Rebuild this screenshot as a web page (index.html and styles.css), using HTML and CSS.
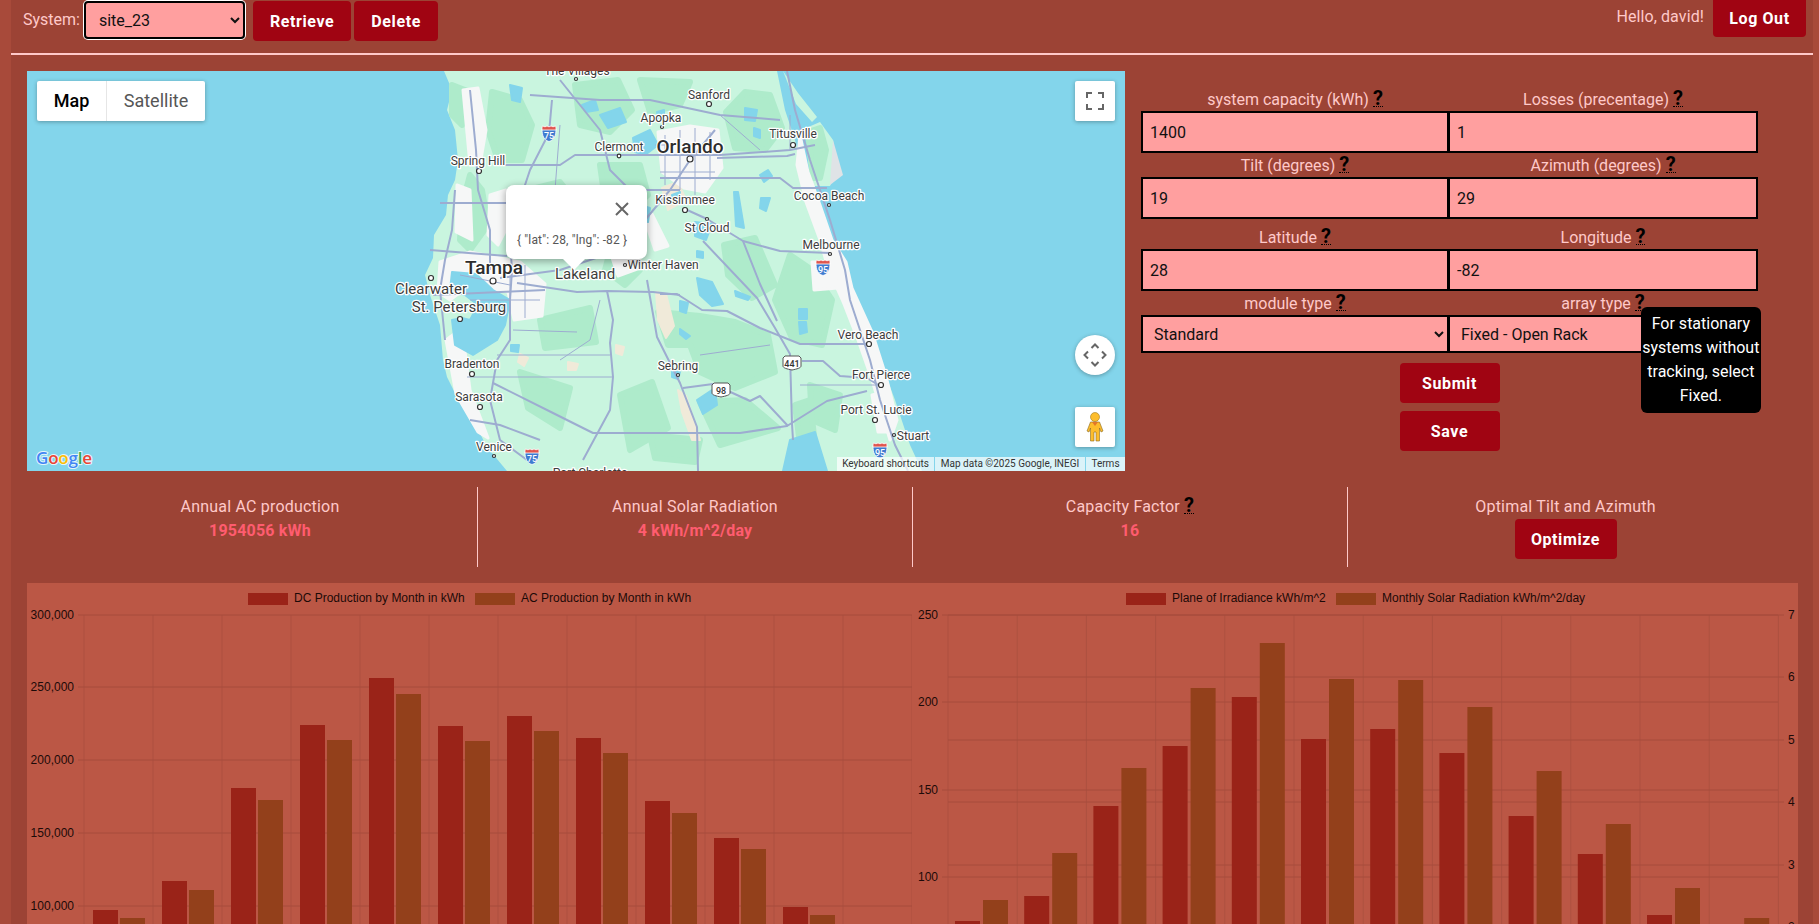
FILE: index.html
```html
<!DOCTYPE html>
<html lang="en">
<head>
    <meta charset="UTF-8">
    <title>Solar Dashboard</title>
    <link rel="stylesheet" href="styles.css">
</head>
<body>
    <div class="container">
        <div class="header">
            <div class="system-bar">
                <label class="system-label" for="systemSelect">System:</label>
                <select class="system-select" id="systemSelect">
                    <option>site_23</option>
                </select>
                <button class="button">Retrieve</button>
                <button class="button">Delete</button>
            </div>
            <div class="user-bar">
                <span class="greeting">Hello, david!</span>
                <button class="button logout">Log Out</button>
            </div>
        </div>
        <hr class="divider">

        <div class="top-row">
            <div class="map">
                <svg class="map-canvas" viewBox="27 71 1098 400" width="1098" height="400">
                    <defs>
                        <symbol id="interstate" viewBox="0 0 16 17">
                            <path d="M1 4C1 11 3 15 8 16.5 13 15 15 11 15 4Z" fill="#3f7bd0" stroke="#fff" stroke-width=".8"/>
                            <path d="M1 5C1 3 1 2 1.500 1L4 1.800 6 1 8 1.800 10 1 12 1.800 14.500 1C15 2 15 3 15 5Z" fill="#e0564f" stroke="#fff" stroke-width=".8"/>
                        </symbol>
                        <symbol id="ushield" viewBox="0 0 20 16">
                            <path d="M3 1H17L19 3V11C19 13 15 14 10 15 5 14 1 13 1 11V3Z" fill="#fff" stroke="#555" stroke-width="1"/>
                        </symbol>
                    </defs>
                    <rect class="water-bg" x="27" y="71" width="1098" height="400"/>

                    <g class="map-base">
                        <!-- land -->
                        <path class="land" d="M444 71 452 90 447 110 455 130 458 160 455 180 448 195 446 215 434 235 433 258 425 275 430 295 440 325 443 360 447 377 460 403 473 420 487 447 507 471H922L910 445 895 400 880 360 870 330 850 285 835 255 825 230 810 190 802 165 795 140 785 110 777 71Z"/>
                        <path class="land" d="M806 128 820 122 833 140 837 170 830 186 812 186 808 160Z"/>
                        <path class="land" d="M783 71 798 93 817 117 812 122 796 104Z"/>
                        <path class="cape" d="M833 140 843 175 830 185Z"/>

                        <!-- woods -->
                        <path class="woods" d="M452 85 470 92 462 125 452 115Z"/>
                        <path class="woods" d="M492 92 520 100 532 125 522 160 498 160 488 130Z"/>
                        <path class="woods" d="M470 175 482 190 488 225 470 250 460 240 462 205Z"/>
                        <path class="woods" d="M528 190 560 182 578 205 570 240 545 252 526 235Z"/>
                        <path class="woods" d="M575 85 618 80 632 110 610 132 580 125Z"/>
                        <path class="woods" d="M640 80 690 82 680 105 650 112Z"/>
                        <path class="woods" d="M726 112 745 92 770 95 782 128 765 150 735 148Z"/>
                        <path class="woods" d="M600 165 640 165 648 195 625 215 605 200Z"/>
                        <path class="woods" d="M724 245 755 238 775 285 752 298 728 275Z"/>
                        <path class="woods" d="M658 312 700 316 735 322 768 335 775 372 735 388 700 372 690 345 668 345Z"/>
                        <path class="woods" d="M790 255 812 270 832 300 822 345 792 338 775 300Z"/>
                        <path class="woods" d="M700 402 745 400 778 428 720 445Z"/>
                        <path class="woods" d="M540 320 590 308 596 342 545 348Z"/>
                        <path class="woods" d="M520 372 570 388 560 428 528 408Z"/>
                        <path class="woods" d="M620 395 652 382 668 428 630 450Z"/>
                        <path class="woods" d="M810 385 840 395 835 430 812 420Z"/>
                        <path class="woods" d="M650 435 700 440 695 462 655 458Z"/>
                        <path class="woods" d="M808 132 820 128 826 150 820 178 813 178Z"/>
                        <path class="woods" d="M795 405 810 400 815 445 800 445Z"/>
                        <path class="woods" d="M615 232 640 270 625 285 605 270Z"/>

                        <!-- sandy patches -->
                        <path class="sand" d="M662 188 678 182 686 200 668 210Z"/>
                        <path class="sand" d="M656 292 666 294 674 326 666 338 658 320Z"/>
                        <path class="sand" d="M568 362 578 364 576 370 568 370Z"/>
                        <path class="sand" d="M520 354 528 358 524 366 518 362Z"/>
                        <path class="sand" d="M616 345 624 347 622 355 616 353Z"/>
                        <path class="sand" d="M678 390 686 396 700 440 692 440 682 412Z"/>

                        <!-- towns -->
                        <path class="urban" d="M463 90 478 88 486 130 480 165 470 165Z"/>
                        <path class="urban" d="M457 185 470 190 472 240 456 232Z"/>
                        <path class="urban" d="M490 195 506 190 510 222 498 245 488 235Z"/>
                        <path class="urban" d="M440 262 470 252 520 262 545 284 542 316 514 320 508 292 470 285 450 300 438 292Z"/>
                        <path class="urban" d="M658 132 690 126 718 130 722 168 705 192 684 188 662 172Z"/>
                        <path class="urban" d="M446 340 462 328 470 390 488 438 478 432 456 394Z"/>
                        <path class="urban" d="M800 135 808 172 820 205 832 240 846 262 852 288 872 332 886 376 897 420 890 440 884 420 872 380 858 340 844 304 828 268 820 240 806 202 797 165Z"/>
                        <path class="urban" d="M812 262 832 262 838 288 814 290Z"/>
                        <path class="urban" d="M605 236 625 240 640 268 618 276Z"/>
                        <path class="urban" d="M640 206 652 214 668 246 655 250Z"/>
                        <path class="urban" d="M872 395 884 392 890 432 878 432Z"/>

                        <!-- lakes -->
                        <path class="lake" d="M452 272 476 274 493 290 510 300 505 325 497 340 473 355 455 345 452 320 462 318 470 320 478 305 465 295 450 290Z"/>
                        <path class="lake" d="M633 138 650 130 658 145 645 155 635 152Z"/>
                        <path class="lake" d="M697 278 712 282 723 304 712 306 700 295Z"/>
                        <path class="lake" d="M697 400 715 388 717 405 703 414Z"/>
                        <path class="lake" d="M783 471 790 440 815 432 827 471Z"/>
                        <path class="lake" d="M695 222 712 224 706 240 695 236Z"/>
                        <path class="lake" d="M745 108 757 110 755 121 745 120Z"/>
                        <path class="lake" d="M754 128 760 130 760 138 754 136Z"/>
                        <path class="lake" d="M761 198 770 198 766 211 760 208Z"/>
                        <path class="lake" d="M734 192 738 192 744 228 736 226Z"/>
                        <path class="lake" d="M680 301 688 303 686 313 680 311Z"/>
                        <path class="lake" d="M697 251 703 252 703 258 697 257Z"/>
                        <path class="lake" d="M680 329 690 336 686 339 680 334Z"/>
                        <path class="lake" d="M735 291 750 297 748 300 736 296Z"/>
                        <path class="lake" d="M799 309 807 309 807 319 799 319Z"/>
                        <path class="lake" d="M799 322 806 322 807 332 800 334Z"/>
                        <path class="lake" d="M672 371 680 372 678 379 672 377Z"/>
                        <path class="lake" d="M640 205 650 208 648 222 638 218Z"/>
                        <path class="lake" d="M510 85 522 88 520 102 512 100Z"/>
                        <path class="lake" d="M582 105 595 100 598 110 586 112Z"/>
                        <path class="lake" d="M600 115 620 108 626 122 608 128Z"/>
                        <path class="lake" d="M657 112 664 110 664 118 658 118Z"/>
                        <path class="lake" d="M511 345 519 345 518 352 511 351Z"/>
                        <path class="lake" d="M672 195 680 192 678 200 672 200Z"/>
                        <path class="lake" d="M760 175 768 170 772 176 764 182Z"/>
                    </g>

                    <!-- roads -->
                    <g class="roads">
                        <path d="M552 100 549 133 530 170 520 200 510 240 512 270 510 300 510 340 497 360 490 400 500 440 527 460"/>
                        <path d="M470 90 476 150 478 190 490 230 490 270"/>
                        <path d="M455 190 452 230 445 260 440 290 445 340"/>
                        <path d="M500 278 560 270 620 250 670 190 690 160 715 130"/>
                        <path d="M560 80 600 130 610 170 630 190 680 190"/>
                        <path d="M500 165 560 165 575 155 650 155 720 155 790 150 815 145"/>
                        <path d="M530 95 600 100 650 100 720 115 780 120"/>
                        <path d="M787 71 795 110 810 160 830 220 845 270 850 300 870 360 880 400 895 445 908 471"/>
                        <path d="M517 283 577 292 607 291 653 292 680 295"/>
                        <path d="M607 291 613 320 610 343 613 377 610 410 583 460"/>
                        <path d="M647 280 657 337 680 383 697 427 698 471"/>
                        <path d="M493 383 553 413 593 433 740 433 787 426 827 401 867 391"/>
                        <path d="M660 294 677 294 702 310 727 311 760 328 800 344 868 344"/>
                        <path d="M703 241 757 298 775 328 790 354 792 424 793 440"/>
                        <path d="M685 209 707 219 743 241 780 251 830 253"/>
                        <path d="M743 241 760 284 777 321"/>
                        <path d="M660 178 780 178 793 188 827 188"/>
                        <path d="M717 158 787 156 795 154"/>
                        <path d="M802 361 823 361 840 376 867 378 880 386"/>
                        <path d="M683 388 713 384 750 401 760 396 788 426"/>
                        <path d="M440 203 507 203"/>
                        <path d="M433 295 545 290"/>
                        <path d="M470 420 500 425 540 440"/>
                        <path d="M430 250 507 256"/>
                    </g>
                    <g class="roads thin">
                        <path d="M665 135V185M680 130V190M695 128V195M710 132V180"/>
                        <path d="M655 145H720M660 172H715"/>
                        <path d="M510 270V320M525 265V318M460 275 510 285M470 300H540"/>
                        <path d="M560 125 555 190M600 300 590 340 560 360"/>
                        <path d="M467 377 613 377M497 355 610 355M513 330 577 332"/>
                        <path d="M720 115 760 150M790 115 790 150M700 355 770 345M800 385H880"/>
                    </g>

                    <!-- shields -->
                    <use href="#interstate" x="541" y="125" width="16" height="17"/>
                    <text class="shield-text" x="549" y="139">75</text>
                    <use href="#interstate" x="524" y="448" width="16" height="17"/>
                    <text class="shield-text" x="532" y="462">75</text>
                    <use href="#interstate" x="815" y="259" width="16" height="17"/>
                    <text class="shield-text" x="823" y="273">95</text>
                    <use href="#interstate" x="872" y="442" width="16" height="17"/>
                    <text class="shield-text" x="880" y="456">95</text>
                    <use href="#ushield" x="782" y="355" width="20" height="16"/>
                    <text class="shield-text dark" x="792" y="367">441</text>
                    <use href="#ushield" x="711" y="382" width="20" height="16"/>
                    <text class="shield-text dark" x="721" y="394">98</text>

                    <!-- city dots -->
                    <g class="dots">
                        <circle cx="479" cy="171" r="2.500"/><circle cx="619" cy="156" r="1.800"/>
                        <circle cx="662" cy="127" r="1.500"/><circle cx="709" cy="104" r="2.500"/>
                        <circle cx="690" cy="159" r="3"/><circle cx="493" cy="281" r="3"/>
                        <circle cx="431" cy="278" r="2.500"/><circle cx="460" cy="319" r="2.500"/>
                        <circle cx="685" cy="210" r="2.500"/><circle cx="707" cy="219" r="1.500"/>
                        <circle cx="625" cy="265" r="1.500"/><circle cx="793" cy="145" r="2.500"/>
                        <circle cx="829" cy="205" r="1.500"/><circle cx="830" cy="254" r="1.500"/>
                        <circle cx="869" cy="344" r="2.500"/><circle cx="881" cy="385" r="2.500"/>
                        <circle cx="875" cy="420" r="2.500"/><circle cx="894" cy="435" r="1.500"/>
                        <circle cx="678" cy="375" r="1.500"/><circle cx="472" cy="374" r="2.500"/>
                        <circle cx="480" cy="407" r="2.500"/><circle cx="494" cy="456" r="1.500"/>
                        <circle cx="576" cy="79" r="1.500"/>
                    </g>

                    <!-- city labels -->
                    <g class="places">
                        <text x="577" y="75">The Villages</text>
                        <text x="709" y="99">Sanford</text>
                        <text x="661" y="122">Apopka</text>
                        <text x="619" y="151">Clermont</text>
                        <text x="478" y="165">Spring Hill</text>
                        <text x="793" y="138">Titusville</text>
                        <text x="685" y="204">Kissimmee</text>
                        <text x="707" y="232">St Cloud</text>
                        <text x="829" y="200">Cocoa Beach</text>
                        <text x="663" y="269">Winter Haven</text>
                        <text x="831" y="249">Melbourne</text>
                        <text x="868" y="339">Vero Beach</text>
                        <text x="678" y="370">Sebring</text>
                        <text x="472" y="368">Bradenton</text>
                        <text x="881" y="379">Fort Pierce</text>
                        <text x="479" y="401">Sarasota</text>
                        <text x="876" y="414">Port St. Lucie</text>
                        <text x="913" y="440">Stuart</text>
                        <text x="494" y="451">Venice</text>
                        <text x="590" y="477">Port Charlotte</text>
                        <text class="medium" x="431" y="294">Clearwater</text>
                        <text class="medium" x="459" y="312">St. Petersburg</text>
                        <text class="medium" x="585" y="279">Lakeland</text>
                        <text class="large" x="494" y="274">Tampa</text>
                        <text class="large" x="690" y="153">Orlando</text>
                    </g>
                </svg>

                <div class="map-type">
                    <div class="map-type-item active">Map</div>
                    <div class="map-type-item">Satellite</div>
                </div>

                <div class="map-popup">
                    <svg class="popup-close" viewBox="0 0 14 14" width="14" height="14">
                        <path d="M1 1 13 13M13 1 1 13"/>
                    </svg>
                    <div class="popup-text">{ "lat": 28, "lng": -82 }</div>
                </div>

                <button class="map-control fullscreen">
                    <svg viewBox="0 0 18 18" width="18" height="18">
                        <path d="M1 6V1H6M12 1H17V6M17 12V17H12M6 17H1V12"/>
                    </svg>
                </button>
                <button class="map-control pan">
                    <svg viewBox="0 0 24 24" width="24" height="24">
                        <path d="M8.500 5 12 1.500 15.500 5M5 8.500 1.500 12 5 15.500M19 8.500 22.500 12 19 15.500M8.500 19 12 22.500 15.500 19"/>
                    </svg>
                </button>
                <button class="map-control pegman">
                    <svg viewBox="0 0 18 30" width="18" height="30">
                        <circle cx="9" cy="5" r="4.500" fill="#fdbd2c" stroke="#a07a22" stroke-width=".6"/>
                        <path d="M4.500 10H13.500L17 19 15 20 13.500 16V29H10V20H8V29H4.500V16L3 20 1 19Z" fill="#fdbd2c" stroke="#8a6a20" stroke-width=".6"/>
                        <path d="M6 10H12L9 14Z" fill="#e2762a"/>
                    </svg>
                </button>

                <div class="google-logo"><span class="g-blue">G</span><span class="g-red">o</span><span class="g-yellow">o</span><span class="g-blue">g</span><span class="g-green">l</span><span class="g-red">e</span></div>
                <div class="attribution">
                    <span class="attribution-item shortcuts">Keyboard shortcuts</span>
                    <span class="attribution-item data">Map data ©2025 Google, INEGI</span>
                    <span class="attribution-item terms">Terms</span>
                </div>
            </div>

            <div class="system-form">
                <div class="form-row">
                    <div class="form-cell">
                        <div class="field-label">system capacity (kWh) <span class="help">?</span></div>
                        <input class="field" type="text" value="1400">
                    </div>
                    <div class="form-cell">
                        <div class="field-label">Losses (precentage) <span class="help">?</span></div>
                        <input class="field" type="text" value="1">
                    </div>
                </div>
                <div class="form-row">
                    <div class="form-cell">
                        <div class="field-label">Tilt (degrees) <span class="help">?</span></div>
                        <input class="field" type="text" value="19">
                    </div>
                    <div class="form-cell">
                        <div class="field-label">Azimuth (degrees) <span class="help">?</span></div>
                        <input class="field" type="text" value="29">
                    </div>
                </div>
                <div class="form-row spaced">
                    <div class="form-cell">
                        <div class="field-label">Latitude <span class="help">?</span></div>
                        <input class="field" type="text" value="28">
                    </div>
                    <div class="form-cell">
                        <div class="field-label">Longitude <span class="help">?</span></div>
                        <input class="field" type="text" value="-82">
                    </div>
                </div>
                <div class="form-row">
                    <div class="form-cell">
                        <div class="field-label">module type <span class="help">?</span></div>
                        <select class="field field-select"><option>Standard</option></select>
                    </div>
                    <div class="form-cell">
                        <div class="field-label">array type <span class="help">?<span class="tooltip">For stationary systems without tracking, select Fixed.</span></span></div>
                        <select class="field field-select"><option>Fixed - Open Rack</option></select>
                    </div>
                </div>
                <div class="form-actions">
                    <button class="button wide">Submit</button>
                    <button class="button wide">Save</button>
                </div>
            </div>
        </div>

        <div class="stats">
            <div class="stat">
                <div class="stat-title">Annual AC production</div>
                <div class="stat-value">1954056 kWh</div>
            </div>
            <div class="stat">
                <div class="stat-title">Annual Solar Radiation</div>
                <div class="stat-value">4 kWh/m^2/day</div>
            </div>
            <div class="stat">
                <div class="stat-title">Capacity Factor <span class="help">?</span></div>
                <div class="stat-value">16</div>
            </div>
            <div class="stat">
                <div class="stat-title">Optimal Tilt and Azimuth</div>
                <button class="button optimize">Optimize</button>
            </div>
        </div>

        <div class="charts">
            <svg class="chart" id="productionChart" width="885" height="341"></svg>
            <svg class="chart" id="radiationChart" width="886" height="341"></svg>
        </div>
    </div>

    <script src="charts.js"></script>
</body>
</html>
```
FILE: styles.css
```css
/* base */
body {
    font-family: 'Roboto', 'Liberation Sans', sans-serif;
    margin: 0;
    height: 924px;
    overflow: hidden;
    background-color: #a84a3a;
    color: #ffc9c9;
    font-size: 16px;
}
.container {
    margin: 0 6px 0 11px;
    height: 924px;
    background-color: #9c4335;
}
.button {
    font-family: inherit;
    font-size: 16px;
    font-weight: bold;
    letter-spacing: 0.6px;
    color: #fff;
    background: #a00412;
    border: none;
    border-radius: 4px;
    height: 40px;
    padding: 0 17px;
}

/* header */
.header {
    display: flex;
    justify-content: space-between;
    height: 53px;
}
.system-bar {
    display: flex;
    align-items: flex-start;
    padding: 1px 0 0 12px;
}
.system-label {
    line-height: 38px;
    margin-right: 4px;
}
.system-select {
    font-family: inherit;
    font-size: 16px;
    width: 161px;
    height: 38px;
    padding-left: 9px;
    margin-right: 8px;
    color: #111;
    background: #ff9f9f;
    border: 2px solid #000;
    border-radius: 4px;
    box-shadow: 0 0 0 1px #fff;
}
.system-bar .button {
    margin-right: 3px;
}
.user-bar {
    display: flex;
    align-items: flex-start;
    padding-right: 7px;
}
.greeting {
    line-height: 34px;
    margin-right: 9px;
    letter-spacing: 0.1px;
}
.logout {
    height: 37px;
    width: 93px;
    padding: 0;
    border-radius: 0 0 4px 4px;
}
.divider {
    margin: 0;
    height: 2px;
    border: none;
    background: #ffc9c9;
}

/* map */
.top-row {
    display: flex;
    gap: 16px;
    padding: 16px 0 0 16px;
}
.map {
    position: relative;
    width: 1098px;
    height: 400px;
    overflow: hidden;
    flex: none;
    font-family: 'Roboto', sans-serif;
}
.map-canvas {
    display: block;
}
.map-base {
    filter: blur(0.6px);
}
.water-bg, .lake { fill: #83d5eb; }
.lake {
    stroke: #83d5eb;
    stroke-width: 2;
    stroke-linejoin: round;
}
.land { fill: #c9f5df; }
.cape { fill: #dfe3e6; }
.woods {
    fill: #aeebcb;
    stroke: #aeebcb;
    stroke-width: 6;
    stroke-linejoin: round;
}
.urban {
    fill: #f6f7f7;
    stroke: #f6f7f7;
    stroke-width: 3;
    stroke-linejoin: round;
}
.sand {
    fill: #f0ead9;
    stroke: #f0ead9;
    stroke-width: 2;
    stroke-linejoin: round;
}
.roads {
    filter: blur(0.4px);
}
.roads path {
    fill: none;
    stroke: #9dacd0;
    stroke-width: 2;
    stroke-linejoin: round;
}
.roads.thin path {
    stroke-width: 1;
}
.dots circle {
    fill: #fff;
    stroke: #333;
    stroke-width: 1.200;
}
.places text {
    font-family: 'Roboto', sans-serif;
    font-size: 12px;
    text-anchor: middle;
    fill: #3c3c3c;
    stroke: #fff;
    stroke-width: 2.500px;
    paint-order: stroke;
    stroke-linejoin: round;
}
.places .medium {
    font-size: 15px;
}
.places .large {
    font-size: 19px;
    font-weight: 500;
    fill: #2d2d2d;
}
.shield-text {
    font-family: 'Roboto', sans-serif;
    font-size: 9px;
    font-weight: 500;
    text-anchor: middle;
    fill: #fff;
}
.shield-text.dark {
    fill: #333;
}
.map-type {
    position: absolute;
    top: 10px;
    left: 10px;
    display: flex;
    background: #fff;
    border-radius: 2px;
    box-shadow: 0 1px 4px rgba(0,0,0,0.3);
}
.map-type-item {
    box-sizing: border-box;
    width: 98px;
    font-size: 18px;
    line-height: 40px;
    text-align: center;
    color: #565656;
}
.map-type-item.active {
    width: 70px;
    color: #000;
    font-weight: 500;
    border-right: 1px solid #e6e6e6;
}
.map-popup {
    position: absolute;
    left: 479px;
    top: 114px;
    width: 141px;
    height: 74px;
    background: #fff;
    border-radius: 8px;
    box-shadow: 0 2px 7px 1px rgba(0,0,0,0.3);
}
.map-popup::after {
    content: "";
    position: absolute;
    left: 57px;
    bottom: -11px;
    border-left: 11px solid transparent;
    border-right: 11px solid transparent;
    border-top: 11px solid #fff;
}
.popup-close {
    position: absolute;
    top: 17px;
    right: 18px;
}
.popup-close path {
    fill: none;
    stroke: #666;
    stroke-width: 2;
}
.popup-text {
    position: absolute;
    left: 11px;
    top: 48px;
    font-size: 12px;
    letter-spacing: 0.15px;
    color: #565656;
    white-space: nowrap;
}
.map-control {
    position: absolute;
    right: 10px;
    width: 40px;
    height: 40px;
    padding: 0;
    border: none;
    background: #fff;
    border-radius: 2px;
    box-shadow: 0 1px 4px rgba(0,0,0,0.3);
    display: flex;
    align-items: center;
    justify-content: center;
}
.fullscreen { top: 10px; }
.pan {
    top: 264px;
    border-radius: 50%;
}
.pegman { top: 336px; }
.fullscreen path, .pan path {
    fill: none;
    stroke: #666;
    stroke-width: 2;
}
.google-logo {
    position: absolute;
    left: 9px;
    bottom: 3px;
    font-family: 'Open Sans', sans-serif;
    font-size: 17px;
    line-height: 20px;
    font-weight: 600;
    letter-spacing: -0.2px;
    paint-order: stroke;
    -webkit-text-stroke: 2px rgba(255,255,255,0.8);
}
.g-blue { color: #4285f4; }
.g-red { color: #ea4335; }
.g-yellow { color: #fbbc05; }
.g-green { color: #34a853; }
.attribution {
    position: absolute;
    right: 0;
    bottom: 0;
    display: flex;
    gap: 1px;
    height: 14px;
    font-size: 10px;
    line-height: 14px;
    color: #333;
}
.attribution-item {
    background: rgba(255,255,255,0.7);
    text-align: center;
}
.shortcuts { width: 97px; }
.data { width: 150px; }
.terms { width: 39px; }

/* form */
.system-form {
    width: 617px;
    padding-top: 16px;
    position: relative;
}
.form-row {
    display: flex;
}
.form-row.spaced {
    margin-top: 6px;
}
.form-cell {
    width: 308px;
    flex: none;
}
.form-cell + .form-cell {
    width: 310px;
    margin-left: -1px;
}
.field-label {
    height: 24px;
    line-height: 26px;
    text-align: center;
}
.help {
    position: relative;
    font-size: 20px;
    line-height: 16px;
    font-weight: bold;
    color: #000;
    border-bottom: 1px dotted #000;
    display: inline-block;
}
.field {
    display: block;
    box-sizing: border-box;
    width: 100%;
    height: 42px;
    padding: 0 7px;
    font-family: inherit;
    font-size: 16px;
    color: #111;
    background: #ff9f9f;
    border: 2px solid #000;
    border-radius: 0;
    outline: none;
}
.field-select {
    height: 38px;
}
.tooltip {
    position: absolute;
    top: 13px;
    left: 6px;
    width: 120px;
    padding: 5px 0;
    font-size: 16px;
    font-weight: normal;
    line-height: 24px;
    text-align: center;
    color: #fff;
    background: #000;
    border-radius: 6px;
    z-index: 2;
}
.form-actions {
    display: flex;
    flex-direction: column;
    align-items: center;
    gap: 8px;
    padding-top: 10px;
}
.button.wide {
    width: 100px;
    padding: 0;
}

/* stat strip */
.stats {
    display: grid;
    grid-template-columns: repeat(4, 435px);
    margin: 16px 0 16px 32px;
    height: 80px;
}
.stat {
    text-align: center;
    padding-top: 8px;
    box-sizing: border-box;
    border-right: 1px solid #ffc9c9;
}
.stat:last-child {
    border-right: none;
}
.stat-title {
    line-height: 24px;
    height: 24px;
    letter-spacing: 0.2px;
}
.stat-value {
    line-height: 24px;
    font-weight: bold;
    letter-spacing: 0.2px;
    color: #ff5c6f;
}
.optimize {
    width: 102px;
    padding: 0;
}

/* charts */
.charts {
    display: flex;
    width: 1771px;
    margin-left: 16px;
    background: #bb5745;
}
.chart {
    display: block;
    font-family: 'Liberation Sans', Arial, sans-serif;
    font-size: 12px;
}
.chart text {
    fill: #1c0a08;
}
.grid-line {
    stroke: #a64d3c;
    stroke-width: 1;
}
.grid-line.faint {
    stroke: #ad5140;
}
.bar-dc { fill: #9a2318; }
.bar-ac { fill: #93401b; }
```
FILE: charts.js
```js
// both charts are drawn in svg, y values are pixels measured from the chart top
const NS = 'http://www.w3.org/2000/svg';
const TOP = 32;

function el(svg, name, attrs, text) {
    const node = document.createElementNS(NS, name);
    for (const key in attrs) node.setAttribute(key, attrs[key]);
    if (text) node.textContent = text;
    svg.appendChild(node);
}

function drawChart(id, c) {
    const svg = document.getElementById(id);

    c.legend.forEach(item => {
        el(svg, 'rect', {x: item.x, y: 10, width: 40, height: 12, class: item.bar});
        el(svg, 'text', {x: item.x + 46, y: 19}, item.label);
    });

    for (let i = 0; i <= 12; i++) {
        const x = c.left + i * c.step;
        el(svg, 'line', {x1: x, x2: x, y1: TOP, y2: 341, class: 'grid-line faint'});
    }

    c.leftTicks.forEach(t => {
        el(svg, 'line', {x1: c.left - 6, x2: c.right, y1: t.y, y2: t.y, class: 'grid-line'});
        el(svg, 'text', {x: c.left - 10, y: t.y + 4, 'text-anchor': 'end'}, t.label);
    });

    (c.rightTicks || []).forEach(t => {
        el(svg, 'line', {x1: c.left, x2: c.right + 6, y1: t.y, y2: t.y, class: 'grid-line'});
        el(svg, 'text', {x: c.right + 10, y: t.y + 4}, t.label);
    });

    c.series.forEach(s => {
        s.tops.forEach((top, i) => {
            el(svg, 'rect', {x: c.left + s.offset + i * c.step, y: top, width: 25, height: 341 - top, class: s.bar});
        });
    });
}

drawChart('productionChart', {
    left: 57,
    right: 885,
    step: 69,
    legend: [
        {x: 221, bar: 'bar-dc', label: 'DC Production by Month in kWh'},
        {x: 448, bar: 'bar-ac', label: 'AC Production by Month in kWh'}
    ],
    leftTicks: [
        {y: 32, label: '300,000'},
        {y: 104, label: '250,000'},
        {y: 177, label: '200,000'},
        {y: 250, label: '150,000'},
        {y: 323, label: '100,000'}
    ],
    series: [
        {bar: 'bar-dc', offset: 9, tops: [327, 298, 205, 142, 95, 143, 133, 155, 218, 255, 324]},
        {bar: 'bar-ac', offset: 36, tops: [335, 307, 217, 157, 111, 158, 148, 170, 230, 266, 332]}
    ]
});

drawChart('radiationChart', {
    left: 36,
    right: 866,
    step: 69.2,
    legend: [
        {x: 214, bar: 'bar-dc', label: 'Plane of Irradiance kWh/m^2'},
        {x: 424, bar: 'bar-ac', label: 'Monthly Solar Radiation kWh/m^2/day'}
    ],
    leftTicks: [
        {y: 32, label: '250'},
        {y: 119, label: '200'},
        {y: 207, label: '150'},
        {y: 294, label: '100'}
    ],
    rightTicks: [
        {y: 32, label: '7'},
        {y: 94, label: '6'},
        {y: 157, label: '5'},
        {y: 219, label: '4'},
        {y: 282, label: '3'},
        {y: 344, label: '2'}
    ],
    series: [
        {bar: 'bar-dc', offset: 7, tops: [338, 313, 223, 163, 114, 156, 146, 170, 233, 271, 332]},
        {bar: 'bar-ac', offset: 35, tops: [317, 270, 185, 105, 60, 96, 97, 124, 188, 241, 305, 335]}
    ]
});
```
